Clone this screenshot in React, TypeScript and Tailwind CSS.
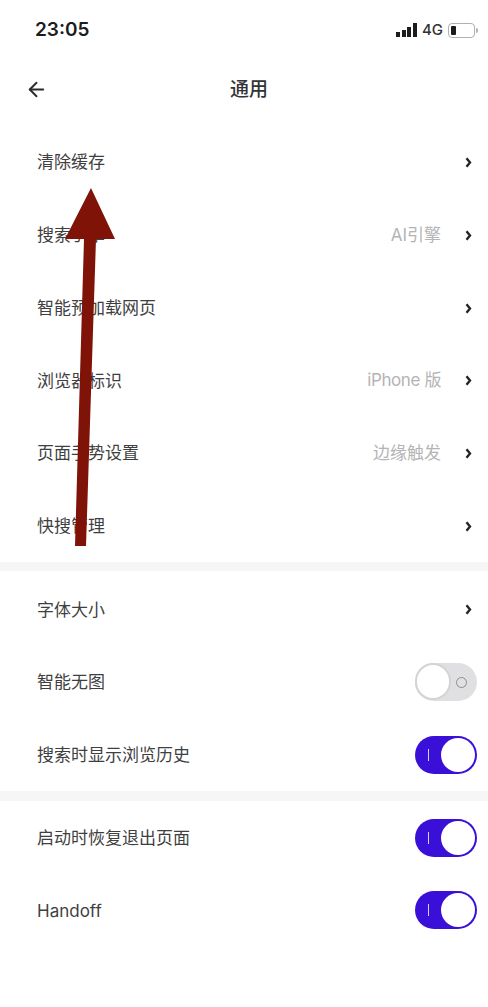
import { ArrowLeft } from 'lucide-react';

function Chevron() {
  return (
    <svg width="7" height="11" viewBox="0 0 7 11" className="ml-[24px]">
      <path d="M1.5 1.2 L5 5.5 L1.5 9.8" fill="none" stroke="#26262a" strokeWidth="2.4" />
    </svg>
  );
}

function Row({ label, value, tight }: { label: string; value?: string; tight?: boolean }) {
  return (
    <div className="flex h-[72.8px] items-center justify-between pl-[37px] pr-[16px] pt-[1px]">
      <span className="pt-[1px] text-[17px] text-[#3f3f42]">{label}</span>
      <div className="flex items-center">
        {value && (
          <span className={tight ? 'text-[17px] tracking-[-0.4px] text-[#b4b4b6]' : 'text-[17px] text-[#b4b4b6]'}>
            {value}
          </span>
        )}
        <Chevron />
      </div>
    </div>
  );
}

function Toggle({ on }: { on: boolean }) {
  if (on) {
    return (
      <div className="relative h-[38px] w-[62px] rounded-full bg-[#3a10d8]">
        <div className="absolute left-[13px] top-[13px] h-[12px] w-[1px] bg-[#d8d0f8]" />
        <div className="absolute left-[26px] top-[2px] h-[34px] w-[34px] rounded-full bg-white" />
      </div>
    );
  }
  return (
    <div className="relative h-[38px] w-[62px] rounded-full bg-[#e0e0e2]">
      <div className="absolute left-[41px] top-[14px] h-[11px] w-[11px] rounded-full border border-[#8c8c8e]" />
      <div className="absolute left-0 top-0 h-[37px] w-[36px] rounded-full border-2 border-[#d4d4d6] bg-white" />
    </div>
  );
}

function ToggleRow({ label, on }: { label: string; on: boolean }) {
  return (
    <div className="flex h-[72.8px] items-center justify-between pl-[37px] pr-[11px]">
      <span className="pt-[2px] text-[17px] text-[#3f3f42]">{label}</span>
      <Toggle on={on} />
    </div>
  );
}

export default function App() {
  return (
    <div className="relative h-[1007px] w-[488px] overflow-hidden bg-white font-['Inter','Noto_Sans_CJK_SC',sans-serif]">
      {/* Status bar */}
      <div className="flex h-[60px] items-center justify-between pl-[35px] pr-[9px]">
        <span className="text-[19px] font-semibold text-[#1c1c1e]">23:05</span>
        <div className="flex items-center">
          <div className="flex items-end gap-[1.5px]">
            <div className="h-[5px] w-[4px] bg-[#1c1c1e]" />
            <div className="h-[7px] w-[4px] bg-[#1c1c1e]" />
            <div className="h-[10px] w-[4px] bg-[#1c1c1e]" />
            <div className="h-[14px] w-[4px] bg-[#1c1c1e]" />
          </div>
          <span className="ml-[5px] text-[15px] font-medium text-[#333336]">4G</span>
          <div className="ml-[5px] flex h-[15px] w-[27px] items-center rounded-[4px] border border-[#b0b0b2] pl-[2px]">
            <div className="h-[9px] w-[5px] rounded-[1px] bg-[#1c1c1e]" />
          </div>
          <div className="ml-[1px] mr-[1px] h-[5px] w-[2px] rounded-r-sm bg-[#b0b0b2]" />
        </div>
      </div>

      {/* Header */}
      <div className="relative flex h-[59px] items-center justify-center pl-[10px] pt-[2px]">
        <ArrowLeft className="absolute left-[25px] top-[18px] h-[23px] w-[23px] text-[#2a2a2c]" strokeWidth={2} />
        <span className="text-[19px] font-medium text-[#333336]">通用</span>
      </div>

      <div className="h-[6.6px]" />

      <Row label="清除缓存" />
      <Row label="搜索引擎" value="AI引擎" />
      <Row label="智能预加载网页" />
      <Row label="浏览器标识" value="iPhone 版" tight />
      <Row label="页面手势设置" value="边缘触发" />
      <Row label="快搜管理" />

      <div className="h-[9px] bg-[#f6f6f6]" />

      <div className="pt-[1.5px]">
        <Row label="字体大小" />
        <ToggleRow label="智能无图" on={false} />
        <ToggleRow label="搜索时显示浏览历史" on />
      </div>

      <div className="h-[10px] bg-[#f6f6f6]" />

      <ToggleRow label="启动时恢复退出页面" on />
      <ToggleRow label="Handoff" on />

      {/* Red annotation arrow */}
      <svg className="absolute left-0 top-0" width="488" height="600" viewBox="0 0 488 600">
        <polygon points="91,188 115,239 96,239 86,546 75,546 84,239 65,239" fill="#7f1308" />
      </svg>
    </div>
  );
}
